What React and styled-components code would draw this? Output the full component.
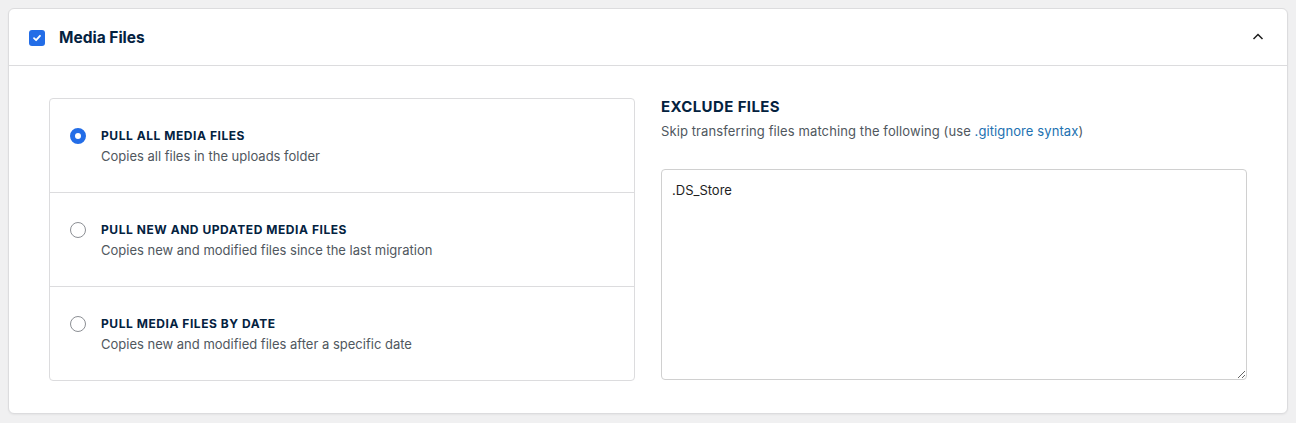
import styled, { createGlobalStyle } from "styled-components";

const GlobalStyle = createGlobalStyle`
  body {
    margin: 0;
    background: #f0f0f1;
    font-family: Inter, "Liberation Sans", sans-serif;
  }
`;

const Page = styled.div`
  padding: 8px 8px 10px 8px;
`;

const Panel = styled.section`
  background: #ffffff;
  border: 1px solid #dcdcde;
  border-radius: 6px;
  box-shadow: 0 1px 2px rgba(0, 0, 0, 0.05);
`;

const Header = styled.div`
  height: 56px;
  display: flex;
  align-items: center;
  padding: 0 22px 0 20px;
  border-bottom: 1px solid #dcdcde;
`;

const Checkbox = styled.span`
  width: 16px;
  height: 16px;
  border-radius: 3px;
  background: #236de7;
  display: flex;
  align-items: center;
  justify-content: center;
  margin-right: 14px;
  margin-top: 2px;
`;

const Title = styled.h2`
  margin: 0;
  flex: 1;
  font-size: 15.5px;
  font-weight: 700;
  color: #04223f;
`;

const Chevron = styled.button`
  border: 0;
  background: none;
  padding: 0;
  display: flex;
  color: #1e1e1e;
`;

const Body = styled.div`
  display: grid;
  grid-template-columns: 1fr 1fr;
  gap: 26px;
  padding: 32px 40px 32px 40px;
`;

const Options = styled.div`
  border: 1px solid #dcdcde;
  border-radius: 4px;
  display: flex;
  flex-direction: column;
`;

const Option = styled.label`
  height: 93px;
  display: flex;
  align-items: center;
  gap: 15px;
  padding: 0 20px;
  border-top: ${(p) => (p.$first ? "0" : "1px solid #dcdcde")};
`;

const Radio = styled.span`
  width: 16px;
  height: 16px;
  border-radius: 50%;
  box-sizing: border-box;
  border: ${(p) => (p.$checked ? "5px solid #236de7" : "1px solid #8c8f94")};
  background: #fff;
  align-self: flex-start;
  margin-top: 29px;
  flex-shrink: 0;
`;

const OptionText = styled.div`
  display: flex;
  flex-direction: column;
  gap: 5px;
`;

const OptionTitle = styled.span`
  font-size: 12px;
  font-weight: 700;
  letter-spacing: 0.55px;
  color: #04223f;
  text-transform: uppercase;
`;

const OptionDesc = styled.span`
  font-size: 13px;
  color: #50575e;
`;

const Exclude = styled.div`
  display: flex;
  flex-direction: column;
`;

const SectionTitle = styled.h3`
  margin: 0;
  font-size: 15px;
  font-weight: 700;
  letter-spacing: 0.4px;
  color: #04223f;
  line-height: 18px;
  text-transform: uppercase;
`;

const SectionDesc = styled.p`
  margin: 6px 0 0;
  font-size: 13px;
  letter-spacing: 0.1px;
  color: #50575e;
  line-height: 18px;
`;

const Link = styled.a`
  color: #2271b1;
  text-decoration: none;
`;

const TextArea = styled.textarea`
  margin-top: 29px;
  height: 211px;
  box-sizing: border-box;
  border: 1px solid #d0d0d0;
  border-radius: 4px;
  padding: 12px 10px;
  font-family: Inter, "Liberation Sans", sans-serif;
  font-size: 13px;
  color: #1e1e1e;
  resize: vertical;
  outline: none;
`;

const options = [
  {
    title: "Pull all media files",
    desc: "Copies all files in the uploads folder",
    checked: true,
  },
  {
    title: "Pull new and updated media files",
    desc: "Copies new and modified files since the last migration",
  },
  {
    title: "Pull media files by date",
    desc: "Copies new and modified files after a specific date",
  },
];

export default function App() {
  return (
    <Page>
      <GlobalStyle />
      <Panel>
        <Header>
          <Checkbox>
            <svg width="10" height="10" viewBox="0 0 10 10" fill="none">
              <path
                d="M2 5.2 L4.1 7.2 L8 2.8"
                stroke="#fff"
                strokeWidth="1.8"
                strokeLinecap="round"
                strokeLinejoin="round"
              />
            </svg>
          </Checkbox>
          <Title>Media Files</Title>
          <Chevron aria-label="Collapse">
            <svg width="14" height="14" viewBox="0 0 14 14" fill="none">
              <path d="M2.5 9 L7 4.5 L11.5 9" stroke="#1e1e1e" strokeWidth="1.5" />
            </svg>
          </Chevron>
        </Header>
        <Body>
          <Options>
            {options.map((o, i) => (
              <Option key={o.title} $first={i === 0}>
                <Radio $checked={o.checked} />
                <OptionText>
                  <OptionTitle>{o.title}</OptionTitle>
                  <OptionDesc>{o.desc}</OptionDesc>
                </OptionText>
              </Option>
            ))}
          </Options>
          <Exclude>
            <SectionTitle>Exclude Files</SectionTitle>
            <SectionDesc>
              Skip transferring files matching the following (use{" "}
              <Link href="#">.gitignore syntax</Link>)
            </SectionDesc>
            <TextArea defaultValue=".DS_Store" />
          </Exclude>
        </Body>
      </Panel>
    </Page>
  );
}
